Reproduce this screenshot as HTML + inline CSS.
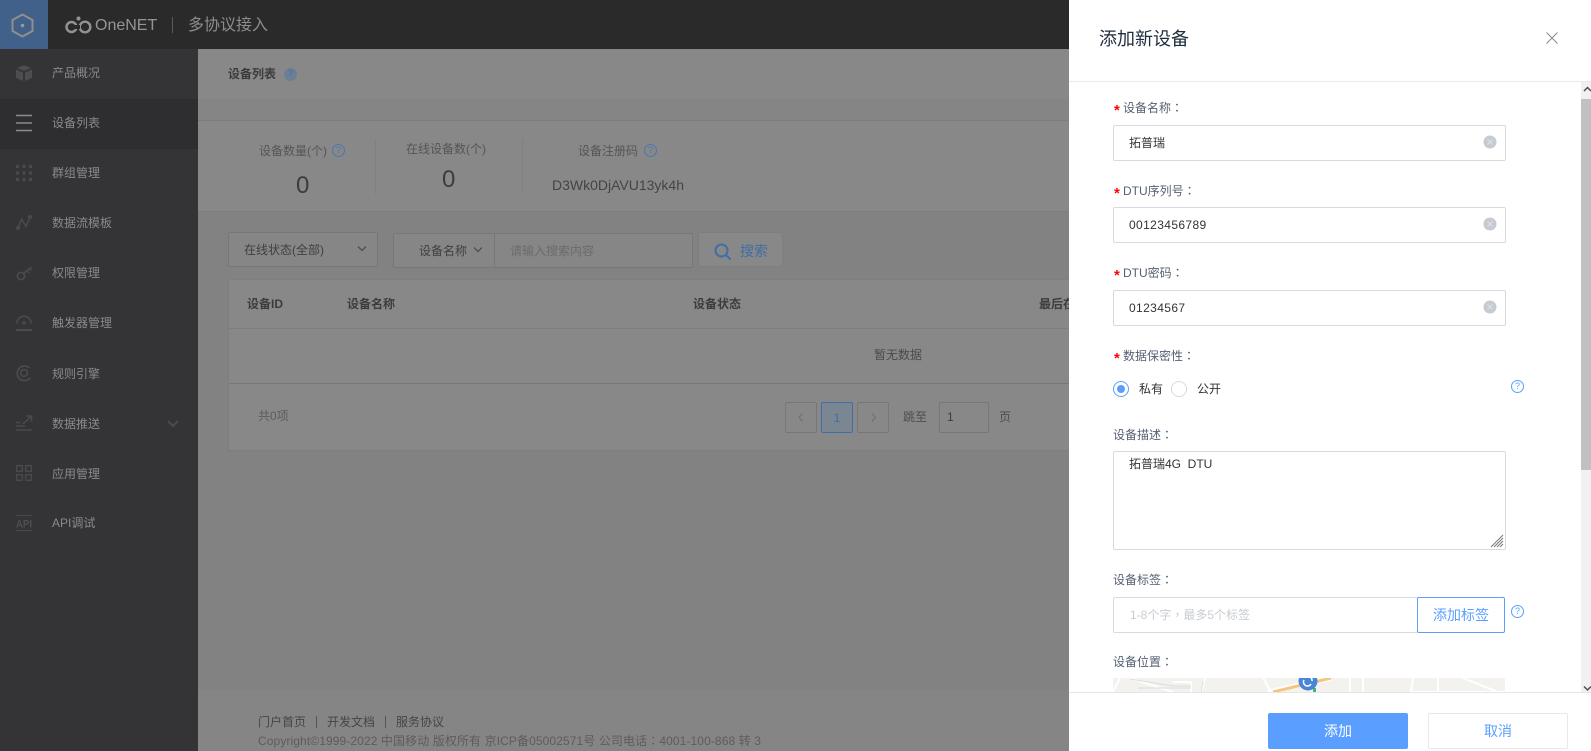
<!DOCTYPE html>
<html lang="zh-CN">
<head>
<meta charset="utf-8">
<title>添加新设备</title>
<style>
html,body{margin:0;padding:0;width:1591px;height:751px;overflow:hidden;background:#828282;font-family:"Liberation Sans","Noto Sans CJK SC",sans-serif;font-size:12px}
.b{position:absolute;box-sizing:border-box}
.t{position:absolute;white-space:nowrap;line-height:20px;height:20px}
svg{position:absolute;overflow:visible}
.m{color:#8a8a8a;left:52px}
.lb{color:#566072;font-size:12px}
.c{font-family:"Noto Sans CJK TC",sans-serif}
.star{color:#f00;font-size:15px;font-weight:700;left:1114px}
.inp{position:absolute;box-sizing:border-box;left:1113px;width:393px;height:36px;border:1px solid #d7dae0;border-radius:2px;background:#fff}
.val{color:#333;left:1129px}
.d{letter-spacing:.38px}
.h{color:#3c3c3c;font-weight:700}
.q{position:absolute;box-sizing:border-box;width:13px;height:13px;border:1px solid #4a78b0;border-radius:50%;color:#4a78b0;font-size:9px;line-height:11px;text-align:center}
.qw{border-color:#5a9fff;color:#5a9fff}
</style>
</head>
<body>
<!-- header -->
<div class="b" style="left:0;top:0;width:1069px;height:49px;background:#2a2a2a"></div>
<div class="b" style="left:0;top:0;width:48px;height:49px;background:#41618a"></div>
<svg style="left:0;top:0" width="48" height="49"><path d="M22.5 14.5 L32.5 20 V31 L22.5 36.5 L12.5 31 V20 Z" fill="none" stroke="#8f8f8f" stroke-width="2"/><circle cx="22.5" cy="25.5" r="1.7" fill="#9a9a9a"/></svg>
<svg style="left:65px;top:15px" width="28" height="19"><circle cx="6.5" cy="12" r="5" fill="none" stroke="#939393" stroke-width="2.4"/><circle cx="20" cy="12" r="5.3" fill="none" stroke="#939393" stroke-width="2.4"/><circle cx="13.5" cy="3.5" r="2" fill="#939393"/><rect x="9" y="10" width="6" height="4" fill="#2a2a2a"/></svg>
<div class="t" style="left:95px;top:16px;font-size:16px;color:#959595">OneNET</div>
<div class="b" style="left:172px;top:17px;width:1px;height:16px;background:#5a5a5a"></div>
<div class="t" style="left:188px;top:16px;font-size:16px;color:#8d8d8d">多协议接入</div>

<!-- sidebar -->
<div class="b" style="left:0;top:49px;width:198px;height:702px;background:#343436"></div>
<div class="b" style="left:0;top:99px;width:198px;height:50px;background:#2e2e30"></div>
<div class="t m" style="top:63px">产品概况</div>
<div class="t m" style="top:113px">设备列表</div>
<div class="t m" style="top:163px">群组管理</div>
<div class="t m" style="top:213px">数据流模板</div>
<div class="t m" style="top:263px">权限管理</div>
<div class="t m" style="top:313px">触发器管理</div>
<div class="t m" style="top:364px">规则引擎</div>
<div class="t m" style="top:414px">数据推送</div>
<div class="t m" style="top:464px">应用管理</div>
<div class="t m" style="top:513px">API调试</div>

<svg style="left:16px;top:65px" width="16" height="16"><path d="M8 0 L15 3 L8 6 L1 3 Z M0 4.5 L7 7.5 V16 L0 13 Z M16 4.5 L9 7.5 V16 L16 13 Z" fill="#4c4c51"/></svg>
<svg style="left:16px;top:115px" width="16" height="16"><path d="M0 .5H16M0 8H16M0 15.5H16" stroke="#8c8c8c" stroke-width="1.6"/></svg>
<svg style="left:16px;top:165px" width="16" height="16"><path d="M0 0h3v3H0zM6.5 0h3v3h-3zM13 0h3v3h-3zM0 6.5h3v3H0zM6.5 6.5h3v3h-3zM13 6.5h3v3h-3zM0 13h3v3H0zM6.5 13h3v3h-3zM13 13h3v3h-3z" fill="#4a4a4e"/></svg>
<svg style="left:16px;top:215px" width="16" height="16"><path d="M2 13 L5.5 4 L10 11.5 L14 2" fill="none" stroke="#4a4a4e" stroke-width="1.5"/><circle cx="2" cy="13" r="2" fill="#4a4a4e"/><circle cx="14" cy="2" r="2" fill="#4a4a4e"/></svg>
<svg style="left:16px;top:265px" width="16" height="16"><circle cx="5" cy="11" r="3.6" fill="none" stroke="#4a4a4e" stroke-width="1.8"/><path d="M8 8 L15.5 2 M11 5.5 L13 8 M13.5 3.5 L15.5 5.5" fill="none" stroke="#4a4a4e" stroke-width="1.5"/></svg>
<svg style="left:16px;top:315px" width="16" height="16"><path d="M.8 8.5 A7.2 7.2 0 0 1 15.2 8.5" fill="none" stroke="#4a4a4e" stroke-width="1.5"/><circle cx="8" cy="8" r="1.8" fill="#4a4a4e"/><path d="M0 15H16" stroke="#525257" stroke-width="1.6"/></svg>
<svg style="left:16px;top:365px" width="16" height="16"><path d="M13.5 3 A7.3 7.3 0 1 0 14.5 12.5" fill="none" stroke="#4a4a4e" stroke-width="1.8"/><circle cx="8" cy="8" r="3.4" fill="none" stroke="#4a4a4e" stroke-width="1.6"/></svg>
<svg style="left:16px;top:415px" width="16" height="16"><path d="M0 7.5H4.5M0 11H9M0 15H16M7 9 L15 1.5M10 1H15.5V6.5" fill="none" stroke="#4a4a4e" stroke-width="1.5"/></svg>
<svg style="left:16px;top:465px" width="16" height="16"><path d="M.7.7h5.6v5.6H.7zM9.7.7h5.6v5.6H9.7zM.7 9.7h5.6v5.6H.7zM9.7 9.7h5.6v5.6H9.7z" fill="none" stroke="#4a4a4e" stroke-width="1.4"/></svg>
<svg style="left:16px;top:515px" width="16" height="16"><path d="M0 .5H16M0 15.5H16" stroke="#4a4a4e" stroke-width="1"/><text x="8" y="12.5" font-family="Liberation Sans" font-size="11" font-weight="700" fill="#4f4f54" text-anchor="middle" textLength="16" lengthAdjust="spacingAndGlyphs">API</text></svg>
<svg style="left:167px;top:420px" width="12" height="8"><path d="M1 1 L6 6 L11 1" fill="none" stroke="#4a4a4e" stroke-width="2.2"/></svg>

<!-- main -->
<div class="b" style="left:198px;top:49px;width:871px;height:50px;background:#888"></div>
<div class="b" style="left:198px;top:99px;width:871px;height:22px;background:#858585;border-bottom:1px solid #7c7c7c"></div>
<div class="t h" style="left:228px;top:64px">设备列表</div>
<div class="q" style="left:284px;top:68px;border:0;background:#6d7f96;color:#3f6ea8">?</div>

<div class="b" style="left:198px;top:121px;width:871px;height:91px;background:#888;border-bottom:1px solid #7e7e7e"></div>
<div class="t" style="left:259px;top:141px;color:#555">设备数量(个)</div>
<div class="q" style="left:332px;top:144px">?</div>
<div class="t" style="left:296px;top:174px;font-size:24px;line-height:24px;height:24px;color:#3c3c3c">0</div>
<div class="b" style="left:375px;top:139px;width:1px;height:55px;background:#808080"></div>
<div class="t" style="left:406px;top:139px;color:#555">在线设备数(个)</div>
<div class="t" style="left:442px;top:168px;font-size:24px;line-height:24px;height:24px;color:#3c3c3c">0</div>
<div class="b" style="left:522px;top:139px;width:1px;height:55px;background:#808080"></div>
<div class="t" style="left:578px;top:141px;color:#555">设备注册码</div>
<div class="q" style="left:644px;top:144px">?</div>
<div class="t" style="left:552px;top:175px;font-size:14px;color:#444">D3Wk0DjAVU13yk4h</div>

<div class="b" style="left:228px;top:232px;width:150px;height:35px;background:#868686;border:1px solid #777;border-radius:2px"></div>
<div class="t" style="left:244px;top:240px;color:#3f3f3f">在线状态(全部)</div>
<svg style="left:357px;top:246px" width="10" height="6"><path d="M1 .5 L5 4.5 L9 .5" fill="none" stroke="#444" stroke-width="1"/></svg>
<div class="b" style="left:393px;top:233px;width:300px;height:35px;background:#868686;border:1px solid #777;border-radius:2px"></div>
<div class="b" style="left:494px;top:233px;width:1px;height:35px;background:#777"></div>
<div class="t" style="left:419px;top:241px;color:#3f3f3f">设备名称</div>
<svg style="left:473px;top:247px" width="10" height="6"><path d="M1 .5 L5 4.5 L9 .5" fill="none" stroke="#444" stroke-width="1"/></svg>
<div class="t" style="left:510px;top:241px;color:#6b6b6b">请输入搜索内容</div>
<div class="b" style="left:698px;top:232px;width:85px;height:35px;background:#888;border:1px solid #7e7e7e;border-radius:2px"></div>
<svg style="left:714px;top:243px" width="18" height="18"><circle cx="7.5" cy="7.5" r="6" fill="none" stroke="#3f6ea8" stroke-width="2"/><path d="M12 12 L16.5 16.5" stroke="#3f6ea8" stroke-width="2"/></svg>
<div class="t" style="left:740px;top:241px;font-size:14px;color:#3f6ea8">搜索</div>

<div class="b" style="left:228px;top:279px;width:841px;height:172px;background:#888;border:1px solid #7e7e7e;border-right:0"></div>
<div class="b" style="left:229px;top:328px;width:840px;height:1px;background:#7e7e7e"></div>
<div class="b" style="left:229px;top:383px;width:840px;height:1px;background:#777"></div>
<div class="t h" style="left:247px;top:294px">设备ID</div>
<div class="t h" style="left:347px;top:294px">设备名称</div>
<div class="t h" style="left:693px;top:294px">设备状态</div>
<div class="t h" style="left:1039px;top:294px;width:30px;overflow:hidden">最后在线</div>
<div class="t" style="left:874px;top:345px;color:#4a4a4a">暂无数据</div>
<div class="t" style="left:258px;top:406px;color:#5c5c5c">共0项</div>
<div class="b" style="left:785px;top:402px;width:32px;height:31px;border:1px solid #777;border-radius:2px"></div>
<svg style="left:798px;top:413px" width="6" height="9"><path d="M4.5 .5 L1 4.5 L4.5 8.5" fill="none" stroke="#6f6f6f"/></svg>
<div class="b" style="left:821px;top:402px;width:32px;height:31px;border:1px solid #3f6ea8;border-radius:2px;background:#7b8693;color:#3f6ea8;text-align:center;line-height:31px">1</div>
<div class="b" style="left:857px;top:402px;width:32px;height:31px;border:1px solid #777;border-radius:2px"></div>
<svg style="left:871px;top:413px" width="6" height="9"><path d="M1 .5 L4.5 4.5 L1 8.5" fill="none" stroke="#6f6f6f"/></svg>
<div class="t" style="left:903px;top:407px;color:#4d4d4d">跳至</div>
<div class="b" style="left:939px;top:402px;width:50px;height:31px;border:1px solid #777;border-radius:2px"></div>
<div class="t" style="left:947px;top:407px;color:#3c3c3c">1</div>
<div class="t" style="left:999px;top:407px;color:#4d4d4d">页</div>

<div class="b" style="left:198px;top:690px;width:871px;height:61px;background:#858585"></div>
<div class="t" style="left:258px;top:712px;color:#454545">门户首页</div>
<div class="b" style="left:316px;top:716px;width:1px;height:12px;background:#555"></div>
<div class="t" style="left:327px;top:712px;color:#454545">开发文档</div>
<div class="b" style="left:385px;top:716px;width:1px;height:12px;background:#555"></div>
<div class="t" style="left:396px;top:712px;color:#454545">服务协议</div>
<div class="t" style="left:258px;top:731px;color:#5c5c5c;letter-spacing:.1px">Copyright©1999-2022 中国移动 版权所有 京ICP备05002571号 公司电话<span class="c" lang="zh-TW">：</span>4001-100-868 转 3</div>

<!-- panel -->
<div class="b" style="left:1069px;top:0;width:522px;height:751px;background:#fff"></div>
<div class="b" style="left:1069px;top:81px;width:522px;height:1px;background:#eaeaea"></div>
<div class="t" style="left:1099px;top:29px;font-size:18px;color:#1f2d3d">添加新设备</div>
<svg style="left:1546px;top:32px" width="12" height="12"><path d="M.5.5 L11.5 11.5 M11.5.5 L.5 11.5" stroke="#888" stroke-width="1"/></svg>

<!-- scrollbar -->
<div class="b" style="left:1581px;top:82px;width:10px;height:611px;background:#f1f1f1"></div>
<div class="b" style="left:1581px;top:99px;width:10px;height:371px;background:#c1c1c1"></div>
<svg style="left:1584px;top:87px" width="7" height="5"><path d="M0 4 L3.5 .5 L7 4" fill="none" stroke="#505050" stroke-width="1.5"/></svg>
<svg style="left:1584px;top:686px" width="7" height="5"><path d="M0 .5 L3.5 4 L7 .5" fill="none" stroke="#505050" stroke-width="1.5"/></svg>

<!-- form -->
<div class="t star" style="top:101px">*</div>
<div class="t lb" style="left:1123px;top:98px">设备名称<span class="c" lang="zh-TW">：</span></div>
<div class="inp" style="top:125px"></div>
<div class="t val" style="top:133px">拓普瑞</div>

<div class="t star" style="top:184px">*</div>
<div class="t lb" style="left:1123px;top:181px">DTU序列号<span class="c" lang="zh-TW">：</span></div>
<div class="inp" style="top:207px"></div>
<div class="t val d" style="top:215px">00123456789</div>

<div class="t star" style="top:266px">*</div>
<div class="t lb" style="left:1123px;top:263px">DTU密码<span class="c" lang="zh-TW">：</span></div>
<div class="inp" style="top:290px"></div>
<div class="t val d" style="top:298px">01234567</div>

<svg style="left:1483px;top:135px" width="14" height="14"><circle cx="7" cy="7" r="6.5" fill="#c6cbd1"/><path d="M4.5 4.5 L9.5 9.5 M9.5 4.5 L4.5 9.5" stroke="#dfe2e6"/></svg>
<svg style="left:1483px;top:217px" width="14" height="14"><circle cx="7" cy="7" r="6.5" fill="#c6cbd1"/><path d="M4.5 4.5 L9.5 9.5 M9.5 4.5 L4.5 9.5" stroke="#dfe2e6"/></svg>
<svg style="left:1483px;top:300px" width="14" height="14"><circle cx="7" cy="7" r="6.5" fill="#c6cbd1"/><path d="M4.5 4.5 L9.5 9.5 M9.5 4.5 L4.5 9.5" stroke="#dfe2e6"/></svg>

<div class="t star" style="top:349px">*</div>
<div class="t lb" style="left:1123px;top:346px">数据保密性<span class="c" lang="zh-TW">：</span></div>
<svg style="left:1113px;top:381px" width="16" height="16"><circle cx="8" cy="8" r="7.5" fill="#fff" stroke="#5a9fff"/><circle cx="8" cy="8" r="4" fill="#5a9fff"/></svg>
<div class="t" style="left:1139px;top:379px;color:#333">私有</div>
<svg style="left:1171px;top:381px" width="16" height="16"><circle cx="8" cy="8" r="7.5" fill="#fff" stroke="#d7dae0"/></svg>
<div class="t" style="left:1197px;top:379px;color:#333">公开</div>
<div class="q qw" style="left:1511px;top:380px">?</div>

<div class="t lb" style="left:1113px;top:425px">设备描述<span class="c" lang="zh-TW">：</span></div>
<div class="inp" style="top:451px;height:99px"></div>
<div class="t val" style="top:454px">拓普瑞4G&nbsp; DTU</div>
<svg style="left:1490px;top:534px" width="14" height="14"><path d="M1 13 L13 1 M4 13 L13 4 M7 13 L13 7 M10 13 L13 10" stroke="#777" stroke-width="1"/></svg>

<div class="t lb" style="left:1113px;top:570px">设备标签<span class="c" lang="zh-TW">：</span></div>
<div class="inp" style="top:597px;width:305px"></div>
<div class="t" style="left:1130px;top:605px;color:#c8ccd2">1-8个字<span class="c" lang="zh-TW">，</span>最多5个标签</div>
<div class="b" style="left:1417px;top:597px;width:88px;height:36px;border:1px solid #5a9fff;border-radius:2px;background:#fff;color:#5a9fff;font-size:14px;line-height:34px;text-align:center">添加标签</div>
<div class="q qw" style="left:1511px;top:605px">?</div>

<div class="t lb" style="left:1113px;top:652px">设备位置<span class="c" lang="zh-TW">：</span></div>
<svg style="left:1113px;top:678px;overflow:hidden" width="392" height="14" viewBox="0 0 392 14">
<rect width="392" height="14" fill="#f3f2ee"/>
<path d="M0 14 L7 0 M17 0 L60 14 M60 4 H78 V14 M92 0 L88 14 M150 0 L158 14 H170 M237 0 V14 M250 0 V14 M300 0 L298 14 H392 M325 0 V14 M350 0 L385 14" fill="none" stroke="#fff" stroke-width="2"/>
<path d="M17 1 L60 8 H78 M25 10 H78 M90 3 L88 14" fill="none" stroke="#dcdcdc" stroke-width="1"/>
<path d="M155 14 L218 0" stroke="#fff" stroke-width="5"/>
<path d="M160 14 L218 0" stroke="#f3c680" stroke-width="3"/>
<rect x="200" y="10" width="3" height="4" fill="#4caf7c"/>
<circle cx="195" cy="3" r="9.5" fill="#4a86d8"/>
<path d="M191 2 A4 4 0 0 0 198 6 M199 3 A4 4 0 0 0 193 -1" fill="none" stroke="#fff" stroke-width="1.5"/>
</svg>

<!-- footer -->
<div class="b" style="left:1069px;top:692px;width:522px;height:59px;background:#fff;border-top:1px solid #e6e6e6"></div>
<div class="b" style="left:1268px;top:713px;width:140px;height:36px;background:#5a9fff;border-radius:2px;color:#fff;font-size:14px;line-height:36px;text-align:center">添加</div>
<div class="b" style="left:1428px;top:713px;width:140px;height:36px;border:1px solid #e8e8e8;border-radius:2px;background:#fff;color:#5a9fff;font-size:14px;line-height:34px;text-align:center">取消</div>
</body>
</html>
